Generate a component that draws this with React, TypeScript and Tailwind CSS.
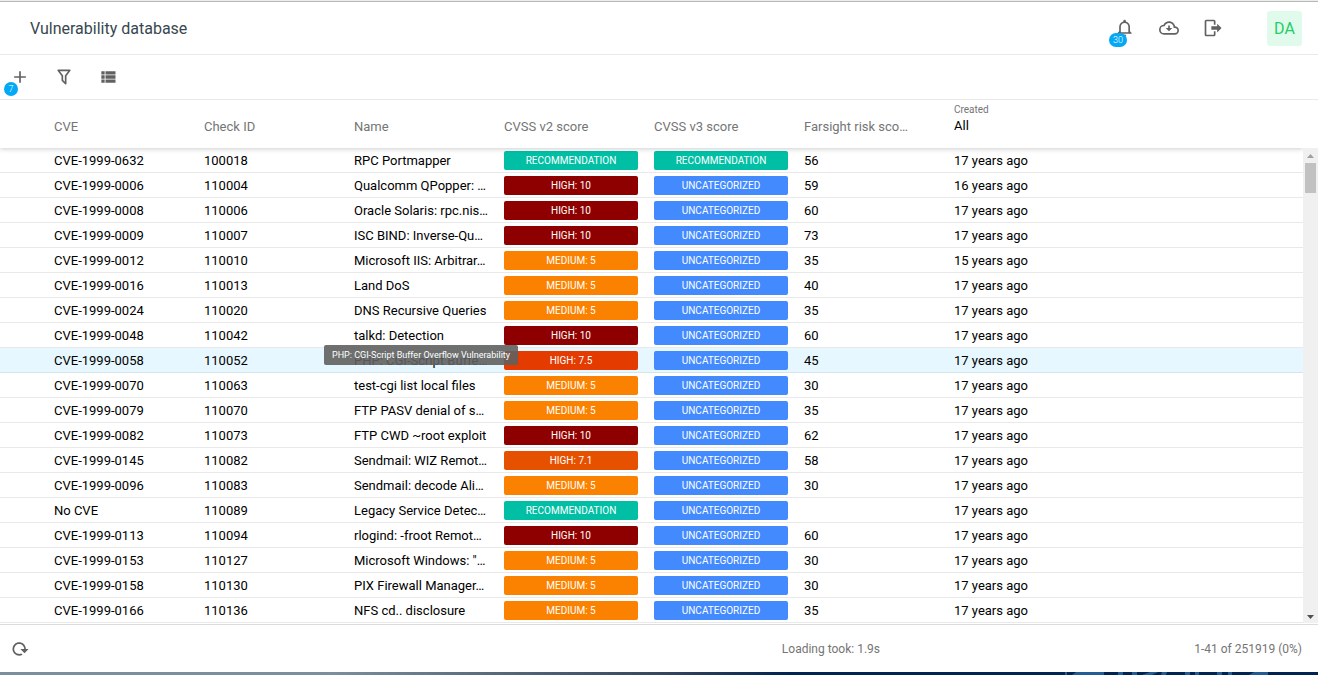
import clsx from "clsx";
import type { ReactNode } from "react";

type Severity = "recommendation" | "high" | "high75" | "high71" | "medium" | "none";

interface Vulnerability {
  cve: string;
  checkId: string;
  name: string;
  v2: Severity;
  v3: Severity;
  risk: string;
  created: string;
}

const BADGES: Record<Severity, { label: string; className: string }> = {
  recommendation: { label: "RECOMMENDATION", className: "bg-[#00bfa5]" },
  high: { label: "HIGH: 10", className: "bg-[#8e0000]" },
  high75: { label: "HIGH: 7.5", className: "bg-[#e33b00]" },
  high71: { label: "HIGH: 7.1", className: "bg-[#e65100]" },
  medium: { label: "MEDIUM: 5", className: "bg-[#fb8200]" },
  none: { label: "UNCATEGORIZED", className: "bg-[#448aff]" },
};

const row = (
  cve: string,
  checkId: string,
  name: string,
  v2: Severity,
  risk: string,
  created = "17 years ago",
  v3: Severity = "none",
): Vulnerability => ({ cve, checkId, name, v2, v3, risk, created });

const ROWS: Vulnerability[] = [
  row("CVE-1999-0632", "100018", "RPC Portmapper", "recommendation", "56", "17 years ago", "recommendation"),
  row("CVE-1999-0006", "110004", "Qualcomm QPopper: …", "high", "59", "16 years ago"),
  row("CVE-1999-0008", "110006", "Oracle Solaris: rpc.nis…", "high", "60"),
  row("CVE-1999-0009", "110007", "ISC BIND: Inverse-Qu…", "high", "73"),
  row("CVE-1999-0012", "110010", "Microsoft IIS: Arbitrar…", "medium", "35", "15 years ago"),
  row("CVE-1999-0016", "110013", "Land DoS", "medium", "40"),
  row("CVE-1999-0024", "110020", "DNS Recursive Queries", "medium", "35"),
  row("CVE-1999-0048", "110042", "talkd: Detection", "high", "60"),
  row("CVE-1999-0058", "110052", "PHP: CGI-Script Buffe…", "high75", "45"),
  row("CVE-1999-0070", "110063", "test-cgi list local files", "medium", "30"),
  row("CVE-1999-0079", "110070", "FTP PASV denial of s…", "medium", "35"),
  row("CVE-1999-0082", "110073", "FTP CWD ~root exploit", "high", "62"),
  row("CVE-1999-0145", "110082", "Sendmail: WIZ Remot…", "high71", "58"),
  row("CVE-1999-0096", "110083", "Sendmail: decode Ali…", "medium", "30"),
  row("No CVE", "110089", "Legacy Service Detec…", "recommendation", ""),
  row("CVE-1999-0113", "110094", "rlogind: -froot Remot…", "high", "60"),
  row("CVE-1999-0153", "110127", 'Microsoft Windows: "…', "medium", "30"),
  row("CVE-1999-0158", "110130", "PIX Firewall Manager…", "medium", "30"),
  row("CVE-1999-0166", "110136", "NFS cd.. disclosure", "medium", "35"),
];

const HOVERED_ID = "110052";

const HEADERS = [
  "CVE",
  "Check ID",
  "Name",
  "CVSS v2 score",
  "CVSS v3 score",
  "Farsight risk sco…",
];

const ICONS = {
  plus: "M19,13H13V19H11V13H5V11H11V5H13V11H19V13Z",
  filter:
    "M15,19.88C15.04,20.18 14.94,20.5 14.71,20.71C14.32,21.1 13.69,21.1 13.3,20.71L9.29,16.7C9.06,16.47 8.96,16.16 9,15.87V10.75L4.21,4.62C3.87,4.19 3.95,3.56 4.38,3.22C4.57,3.08 4.78,3 5,3V3H19V3C19.22,3 19.43,3.08 19.62,3.22C20.05,3.56 20.13,4.19 19.79,4.62L15,10.75V19.88M7.04,5L11,10.06V15.58L13,17.58V10.05L16.96,5H7.04Z",
  list: "M9,5V9H21V5M9,19H21V15H9M9,14H21V10H9M4,9H8V5H4M4,19H8V15H4M4,14H8V10H4V14Z",
  bell: "M16,17H7V10.5C7,8 9,6 11.5,6C14,6 16,8 16,10.5M18,16V10.5C18,7.43 15.86,4.86 13,4.18V3.5A1.5,1.5 0 0,0 11.5,2A1.5,1.5 0 0,0 10,3.5V4.18C7.13,4.86 5,7.43 5,10.5V16L3,18V19H20V18M11.5,22A2,2 0 0,0 13.5,20H9.5A2,2 0 0,0 11.5,22Z",
  cloud:
    "M19,18H6A4,4 0 0,1 2,14A4,4 0 0,1 6,10H6.71C7.37,7.69 9.5,6 12,6A5.5,5.5 0 0,1 17.5,11.5V12H19A3,3 0 0,1 22,15A3,3 0 0,1 19,18M19.35,10.03C18.67,6.59 15.64,4 12,4C9.11,4 6.6,5.64 5.35,8.03C2.34,8.36 0,10.9 0,14A6,6 0 0,0 6,20H19A5,5 0 0,0 24,15C24,12.36 21.95,10.22 19.35,10.03M13,9H11V12H8L12,16L16,12H13V9Z",
  logout:
    "M17,17.25V14H10V10H17V6.75L22.25,12L17,17.25M13,2A2,2 0 0,1 15,4V8H13V4H4V20H13V16H15V20A2,2 0 0,1 13,22H4A2,2 0 0,1 2,20V4A2,2 0 0,1 4,2H13Z",
  reload:
    "M19,12H22.32L17.37,16.95L12.42,12H16.97C17,10.46 16.42,8.93 15.24,7.75C12.9,5.41 9.1,5.41 6.76,7.75C4.42,10.09 4.42,13.9 6.76,16.24C8.6,18.08 11.36,18.47 13.58,17.41L15.05,18.88C12,20.69 8,20.29 5.34,17.65C2.22,14.53 2.23,9.47 5.35,6.35C8.5,3.22 13.53,3.21 16.66,6.34C18.22,7.9 19,9.95 19,12Z",
};

interface IconButtonProps {
  icon: keyof typeof ICONS;
  label: string;
  children?: ReactNode;
}

function IconButton({ icon, label, children }: IconButtonProps) {
  return (
    <button type="button" aria-label={label} className="relative size-5 text-[#616161]">
      <svg viewBox="0 0 24 24" className="size-5" fill="currentColor" fillRule="evenodd">
        <path d={ICONS[icon]} />
      </svg>
      {children}
    </button>
  );
}

function Count({ children }: { children: ReactNode }) {
  return (
    <span className="absolute -left-1.5 top-[15px] flex h-3.5 min-w-3.5 items-center justify-center rounded-full bg-[#03a9f4] px-1 text-[9px] leading-none font-light text-white">
      {children}
    </span>
  );
}

function Badge({ severity }: { severity: Severity }) {
  const { label, className } = BADGES[severity];
  return (
    <span
      className={clsx(
        "block h-[19px] rounded-[2px] text-center text-[10px] leading-[19px] text-white",
        className,
      )}
    >
      {label}
    </span>
  );
}

function TableRow({ item }: { item: Vulnerability }) {
  const hovered = item.checkId === HOVERED_ID;
  return (
    <tr
      className={clsx(
        "h-[25px] *:border-b *:pr-4",
        hovered ? "bg-[#e6f7ff] *:border-[#d5e5ec]" : "*:border-[#e9e9e9]",
      )}
    >
      <td />
      <td className="pt-0.5 leading-5">{item.cve}</td>
      <td className="pt-0.5 leading-5">{item.checkId}</td>
      <td className="relative pt-0.5 leading-5 whitespace-nowrap">
        {item.name}
        {hovered && (
          <span
            role="tooltip"
            className="absolute -top-[3px] -left-[30px] z-10 rounded-[2px] bg-[#616161]/90 px-2 text-[9px] leading-5 text-white"
          >
            PHP: CGI-Script Buffer Overflow Vulnerability
          </span>
        )}
      </td>
      <td className="py-0">
        <Badge severity={item.v2} />
      </td>
      <td className="py-0">
        <Badge severity={item.v3} />
      </td>
      <td className="pt-0.5 leading-5">{item.risk}</td>
      <td className="pt-0.5 leading-5">{item.created}</td>
    </tr>
  );
}

function ScrollBar() {
  return (
    <div className="z-10 mt-12 flex w-[15px] flex-col items-center justify-between bg-[#f0f0f0]">
      <div className="flex flex-col items-center">
        <svg viewBox="0 0 15 15" className="size-[15px]" fill="#a0a0a0">
          <path d="M4 10h7L7.500 6z" />
        </svg>
        <div className="h-[30px] w-[11px] bg-[#c1c1c1]" />
      </div>
      <svg viewBox="0 0 15 15" className="size-[15px]" fill="#505050">
        <path d="M4 7h7L7.500 11z" />
      </svg>
    </div>
  );
}

// sliver of the wallpaper that shows under the window
function Wallpaper() {
  return (
    <div className="flex h-[3px] justify-end bg-linear-to-r from-[#7d8f9d] from-25% via-[#36465f] via-50% to-[#002350] to-60%">
      <svg viewBox="0 0 260 3" className="h-[3px] w-[260px]" fill="#245c96">
        <path d="M7 0h2v3H7zM18 0h28v3H14zM60 0h5v3h-5zM74 0h5v3h-5zM92 0h8l-6 3h-10zM104 0h5l-1 3h-5zM127 0h5v3h-5zM137 0h4v3h-4zM159 0h5v3h-5zM170 0h4v3h-4zM196 0h14v3h-19z" />
      </svg>
    </div>
  );
}

function App() {
  return (
    <div className="mr-[7px] border-t border-[#ededed] bg-white font-[Roboto,sans-serif] text-[13px] text-black">
      <header className="flex h-[54px] items-center justify-between border-t border-b border-t-[#b8b8b8] border-b-[#e9e9e9] pr-4 pl-[30px]">
        <h1 className="pt-0.5 text-base text-[#37474f]">Vulnerability database</h1>
        <div className="flex items-center gap-6">
          <IconButton icon="bell" label="Notifications">
            <Count>30</Count>
          </IconButton>
          <IconButton icon="cloud" label="Downloads" />
          <IconButton icon="logout" label="Log out" />
          <button
            type="button"
            className="ml-5 size-[35px] rounded-[3px] bg-[#e0fbec] pt-0.5 text-base text-[#22cf67]"
          >
            DA
          </button>
        </div>
      </header>

      <div className="flex h-[45px] items-center gap-6 border-b border-[#e9e9e9] px-2.5">
        <IconButton icon="plus" label="Add">
          <Count>7</Count>
        </IconButton>
        <IconButton icon="filter" label="Filter" />
        <IconButton icon="list" label="Columns" />
      </div>

      <main className="flex border-b border-[#dcdcdc] pb-px">
        <table className="flex-1 table-fixed border-separate border-spacing-0 text-left">
          <colgroup>
            <col className="w-[54px]" />
            {HEADERS.map((header) => (
              <col key={header} className="w-[150px]" />
            ))}
            <col />
          </colgroup>
          <thead className="relative shadow-[0_1px_5px_rgba(0,0,0,0.2)] [clip-path:inset(0_0_-8px_0)]">
            <tr className="h-12">
              <td className="p-0" />
              {HEADERS.map((header) => (
                <th
                  key={header}
                  className="p-0 pt-1.5 font-normal whitespace-nowrap text-[#757575]"
                >
                  {header}
                </th>
              ))}
              <th className="p-0 pb-3 align-middle font-normal">
                <label htmlFor="created" className="block text-[10px] leading-4 text-[#757575]">
                  Created
                </label>
                <select id="created" className="block appearance-none leading-4">
                  <option>All</option>
                </select>
              </th>
            </tr>
          </thead>
          <tbody>
            {ROWS.map((item) => (
              <TableRow key={item.checkId} item={item} />
            ))}
          </tbody>
        </table>
        <ScrollBar />
      </main>

      <footer className="flex h-[47px] items-center justify-between pr-4 pl-2.5 text-xs text-[#757575]">
        <IconButton icon="reload" label="Reload" />
        <div className="flex">
          <span>Loading took: 1.9s</span>
          <span className="w-[422px] text-right">1-41 of 251919 (0%)</span>
        </div>
      </footer>
      <Wallpaper />
    </div>
  );
}

export default App;
